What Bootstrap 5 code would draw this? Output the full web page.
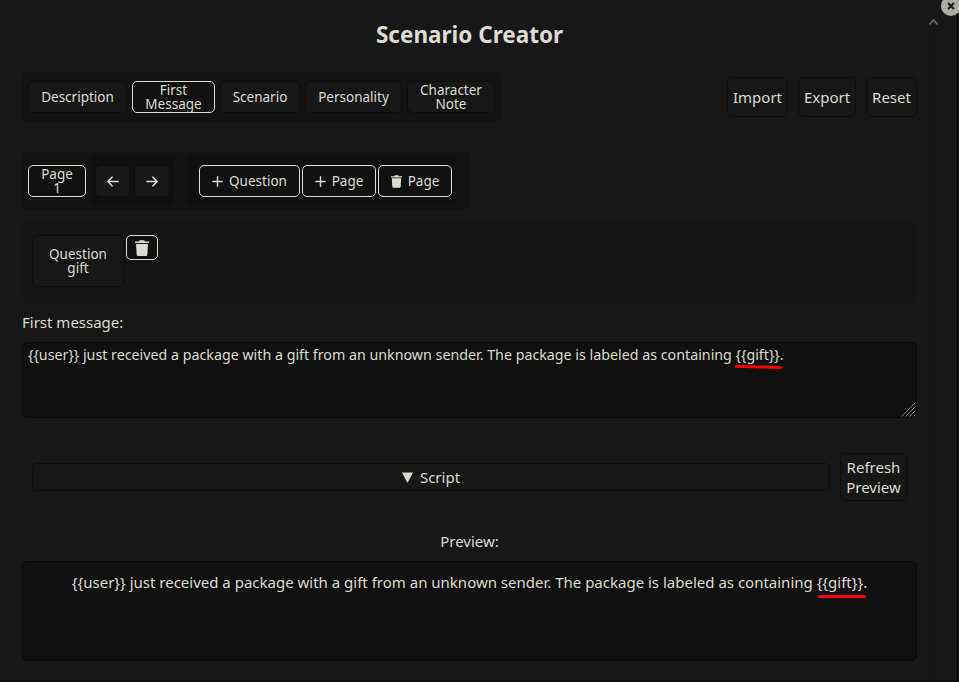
<!DOCTYPE html>
<html lang="en">
<head>
<meta charset="utf-8">
<meta name="viewport" content="width=device-width, initial-scale=1">
<title>Scenario Creator</title>
<link href="https://cdn.jsdelivr.net/npm/bootstrap@5.3.0/dist/css/bootstrap.min.css" rel="stylesheet">
<style>
  html, body { height: 100%; overflow: hidden; }
  body { background: #171717; color: #dcdcd2; font: 15px/20px "Noto Sans", sans-serif; }
  .popup { height: 681px; width: 958px; padding: 20px 40px 0 22px; border-right: 1px solid #050505; border-bottom: 1px solid #0a0a0a; }
  .popup-title { font-size: 22.5px; line-height: 30px; font-weight: 700; }
  .cell { background: #171717; border: 1px solid #0d0d0d; border-radius: 5px; color: inherit; padding: 0; text-align: center; font-size: 13.5px; line-height: 14px; white-space: nowrap; display: flex; align-items: center; justify-content: center; flex: none; height: 32px; }
  .cell.on { border-color: #dcdcd2; background: #111; }
  .cell.big { font-size: 15px; line-height: 20px; }
  .tabs { width: 479px; height: 50px; padding: 0 6px; gap: 5px; background: #131313; border-radius: 5px; }
  .tool-row { margin-top: 22px; }
  .pages { width: 448px; height: 58px; margin-top: 30px; padding: 0 6px; background: #131313; border-radius: 5px; }
  .inner { background: #101010; border-radius: 5px; height: 50px; }
  .arrows { width: 83px; margin-left: 5px; gap: 3px; }
  .arrows .cell { width: 36px; }
  .actions { width: 269px; margin-left: 13px; padding-left: 12px; gap: 2px; }
  .actions svg { margin-right: 6px; }
  .questions { height: 82px; margin-top: 10px; padding: 15px 10px; gap: 2px; background: #151515; border-radius: 5px; }
  .first-label { margin: 10px 0; }
  .field { background: #101010; border: 1px solid #0a0a0a; border-radius: 5px; color: inherit; display: block; width: 100%; }
  textarea.field { height: 76px; padding: 2px 5px; font-size: 14.25px; line-height: 20px; resize: none; overflow: hidden; outline: 0; }
  .preview { height: 100px; padding-top: 10px; text-align: center; }
  .underline-a { left: 713px; top: 22px; }
  .underline-b { left: 795px; top: 33px; }
  .grip { right: 1px; bottom: 1px; }
  .track { left: 925px; top: 14px; width: 16px; height: 666px; background: #16161a80; }
  .close-dot { left: 941px; top: -4px; width: 20px; height: 20px; border-radius: 50%; background: #adada5; border: 0; padding: 0; }
  .w-desc { width: 99px } .w-first { width: 83px } .w-scen { width: 80px } .w-pers { width: 97px } .w-char { width: 88px }
  .w-import { width: 61px } .w-export { width: 58px } .w-reset { width: 51px } .h-tall { height: 40px }
  .w-page { width: 58px } .w-addq { width: 101px } .w-addp { width: 74px }
  .w-question { width: 92px; height: 52px } .w-trash { width: 32px; height: 25px }
  .script-row { margin-top: 35px; padding: 0 10px; gap: 10px; height: 48px; }
  .script-row .bar { width: 798px; height: 28px; }
  .script-row .bar svg { margin-right: 7px; }
  .script-row .refresh { width: 67px; height: 48px; }
  .preview-label { margin: 30px 0 10px; }
</style>
<script src="https://cdn.jsdelivr.net/npm/bootstrap@5.3.0/dist/js/bootstrap.bundle.min.js"></script>
</head>
<body>
<svg class="d-none">
  <symbol id="trash" viewBox="0 0 14 16"><path fill="#dcdcd2" d="M0 1.4h4L4.6.2h4.8l.6 1.2h4v1.5H0zM1 4h12l-.7 10.7a1.3 1.3 0 0 1-1.3 1.2H3a1.3 1.3 0 0 1-1.3-1.2z"/></symbol>
  <symbol id="plus" viewBox="0 0 11 11"><path stroke="#dcdcd2" stroke-width="1.4" stroke-linecap="round" d="M5.5.8v9.4M.8 5.5h9.4"/></symbol>
</svg>
<main class="popup position-relative">
  <h1 class="popup-title text-center m-0">Scenario Creator</h1>

  <div class="tool-row d-flex justify-content-between align-items-center">
    <div class="tabs d-flex align-items-center">
      <button class="cell w-desc">Description</button>
      <button class="cell on w-first">First<br>Message</button>
      <button class="cell w-scen">Scenario</button>
      <button class="cell w-pers">Personality</button>
      <button class="cell w-char">Character<br>Note</button>
    </div>
    <div class="d-flex" style="gap:10px">
      <button class="cell big h-tall w-import">Import</button>
      <button class="cell big h-tall w-export">Export</button>
      <button class="cell big h-tall w-reset">Reset</button>
    </div>
  </div>

  <div class="pages d-flex align-items-center">
    <button class="cell on w-page">Page<br>1</button>
    <div class="inner arrows d-flex align-items-center justify-content-center">
      <button class="cell" aria-label="Previous page"><svg width="12" height="11" viewBox="0 0 12 11" fill="none" stroke="#dcdcd2" stroke-width="1.6" stroke-linecap="round" stroke-linejoin="round"><path d="M11 5.5H1M5 1.2L.9 5.5 5 9.8"/></svg></button>
      <button class="cell" aria-label="Next page"><svg width="12" height="11" viewBox="0 0 12 11" fill="none" stroke="#dcdcd2" stroke-width="1.6" stroke-linecap="round" stroke-linejoin="round"><path d="M1 5.5h10M7 1.2l4.1 4.3L7 9.8"/></svg></button>
    </div>
    <div class="inner actions d-flex align-items-center">
      <button class="cell on w-addq"><svg width="11" height="11"><use href="#plus"/></svg>Question</button>
      <button class="cell on w-addp"><svg width="11" height="11"><use href="#plus"/></svg>Page</button>
      <button class="cell on w-addp"><svg width="11" height="13"><use href="#trash"/></svg>Page</button>
    </div>
  </div>

  <div class="questions d-flex align-items-start">
    <button class="cell w-question">Question<br>gift</button>
    <button class="cell on w-trash" aria-label="Delete question"><svg width="14" height="16"><use href="#trash"/></svg></button>
  </div>

  <label class="first-label d-block" for="first">First message:</label>
  <div class="position-relative">
    <textarea id="first" class="field" spellcheck="false">{{user}} just received a package with a gift from an unknown sender. The package is labeled as containing {{gift}}.</textarea>
    <svg class="underline-a position-absolute" width="48" height="6"><path d="M1.5 2.3L24 3l21.5.4" fill="none" stroke="#fb0007" stroke-width="3" stroke-linecap="round"/></svg>
    <svg class="grip position-absolute" width="15" height="15"><path d="M.5 14.5l14-14M4.5 14.5l10-10M8.5 14.5l6-6M12.5 14.5l2-2" stroke="#85857f" stroke-width="1"/></svg>
  </div>

  <div class="script-row d-flex align-items-center">
    <button class="cell big bar"><svg width="11" height="11"><path fill="#dcdcd2" d="M0 .5h11L5.5 11z"/></svg>Script</button>
    <button class="cell big refresh">Refresh<br>Preview</button>
  </div>

  <div class="preview-label text-center">Preview:</div>
  <div class="position-relative">
    <div class="field preview">{{user}} just received a package with a gift from an unknown sender. The package is labeled as containing {{gift}}.</div>
    <svg class="underline-b position-absolute" width="50" height="5"><path d="M2.5 2.5h45" stroke="#fb0007" stroke-width="3" stroke-linecap="round"/></svg>
  </div>

  <div class="track position-absolute"><svg class="d-block" width="16" height="16"><path d="M4.5 10.3L8.5 6l4 4.3" fill="none" stroke="#66666a" stroke-width="1.8"/></svg></div>
  <button class="close-dot position-absolute d-flex align-items-center justify-content-center" aria-label="Close"><svg width="8" height="8"><path d="M1 1l6 6M7 1L1 7" stroke="#171717" stroke-width="2"/></svg></button>
</main>
</body>
</html>
